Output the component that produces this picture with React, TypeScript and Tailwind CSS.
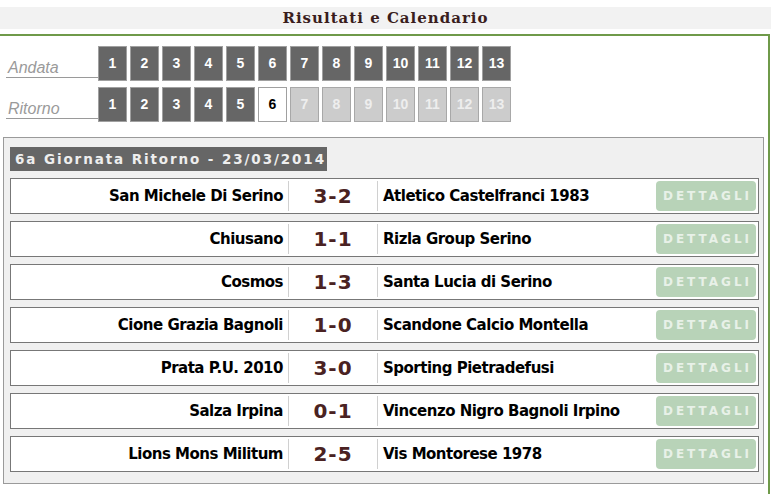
const MATCHES = [
  { home: "San Michele Di Serino", score: "3-2", away: "Atletico Castelfranci 1983" },
  { home: "Chiusano", score: "1-1", away: "Rizla Group Serino" },
  { home: "Cosmos", score: "1-3", away: "Santa Lucia di Serino" },
  { home: "Cione Grazia Bagnoli", score: "1-0", away: "Scandone Calcio Montella" },
  { home: "Prata P.U. 2010", score: "3-0", away: "Sporting Pietradefusi" },
  { home: "Salza Irpina", score: "0-1", away: "Vincenzo Nigro Bagnoli Irpino" },
  { home: "Lions Mons Militum", score: "2-5", away: "Vis Montorese 1978" },
];

const DAYS = Array.from({ length: 13 }, (_, i) => i + 1);

function DayButton({ n, state }: { n: number; state: "on" | "active" | "off" }) {
  const cls =
    state === "on"
      ? "bg-[#666666] text-white border-[#a0a0a0]"
      : state === "active"
        ? "bg-white text-black border-[#a0a0a0]"
        : "bg-[#cccccc] text-[#eeeeee] border-[#a8a8a8]";
  return (
    <div
      className={`w-[29px] h-[35px] border flex items-center justify-center font-['Liberation_Sans'] font-bold text-[14px] ${cls}`}
    >
      {n}
    </div>
  );
}

function NavRow({ label, current }: { label: string; current?: number }) {
  return (
    <div className="flex items-start ml-[6px]">
      <div className="w-[92px] h-[32px] border-b border-[#9a9a9a] flex items-end pl-[2px] pb-[1px]">
        <span className="font-['Liberation_Sans'] italic text-[16px] leading-none text-[#9a9a9a]">
          {label}
        </span>
      </div>
      <div className="flex gap-[3px]">
        {DAYS.map((d) => (
          <DayButton
            key={d}
            n={d}
            state={!current ? "on" : d < current ? "on" : d === current ? "active" : "off"}
          />
        ))}
      </div>
    </div>
  );
}

function MatchRow({ home, score, away }: { home: string; score: string; away: string }) {
  return (
    <div className="h-[36px] bg-white border border-[#777777] flex items-center font-['DejaVu_Sans'] font-bold">
      <div className="w-[277px] text-right pr-[5px] text-[15px] text-black tracking-[-0.5px]">{home}</div>
      <div className="w-px h-[30px] bg-[#d0d0d0]" />
      <div className="w-[88px] text-center text-[20px] text-[#4a2222] tracking-[1px]">{score}</div>
      <div className="w-px h-[30px] bg-[#d0d0d0]" />
      <div className="flex-1 pl-[5px] text-[15px] text-black tracking-[-0.5px]">{away}</div>
      <div className="w-[100px] h-[30px] mr-[2px] rounded-[4px] bg-[#b8d3b8] flex items-center justify-center text-[12px] text-[#e8f1e8] tracking-[3px] pl-[3px]">
        DETTAGLI
      </div>
    </div>
  );
}

export default function App() {
  return (
    <div className="w-[771px] h-[494px] bg-white overflow-hidden">
      {/* Title */}
      <div className="mt-[7px] h-[22px] bg-[#f2f2f2] flex items-center justify-center">
        <span className="font-['DejaVu_Serif'] font-bold text-[15px] tracking-[1px] text-[#3a1d1d]">
          Risultati e Calendario
        </span>
      </div>

      {/* Green box */}
      <div className="mt-[5px] w-[770px] h-[500px] border-t-2 border-r-2 border-[#6f9a4a] pt-[10px]">
        <div className="flex flex-col gap-[6px]">
          <NavRow label="Andata" />
          <NavRow label="Ritorno" current={6} />
        </div>

        {/* Results panel */}
        <div className="mt-[15px] ml-[3px] w-[761px] bg-[#f0f0f0] border border-[#9a9a9a] pt-[9px] pl-[6px] pr-[4px] pb-[11px]">
          <div className="w-[317px] h-[24px] bg-[#666666] flex items-center pl-[5px]">
            <span className="font-['DejaVu_Sans'] font-bold text-[13.5px] tracking-[1.9px] text-[#eeeeee]">
              6a Giornata Ritorno - 23/03/2014
            </span>
          </div>
          <div className="mt-[7px] flex flex-col gap-[7px]">
            {MATCHES.map((m) => (
              <MatchRow key={m.home} {...m} />
            ))}
          </div>
        </div>
      </div>
    </div>
  );
}
